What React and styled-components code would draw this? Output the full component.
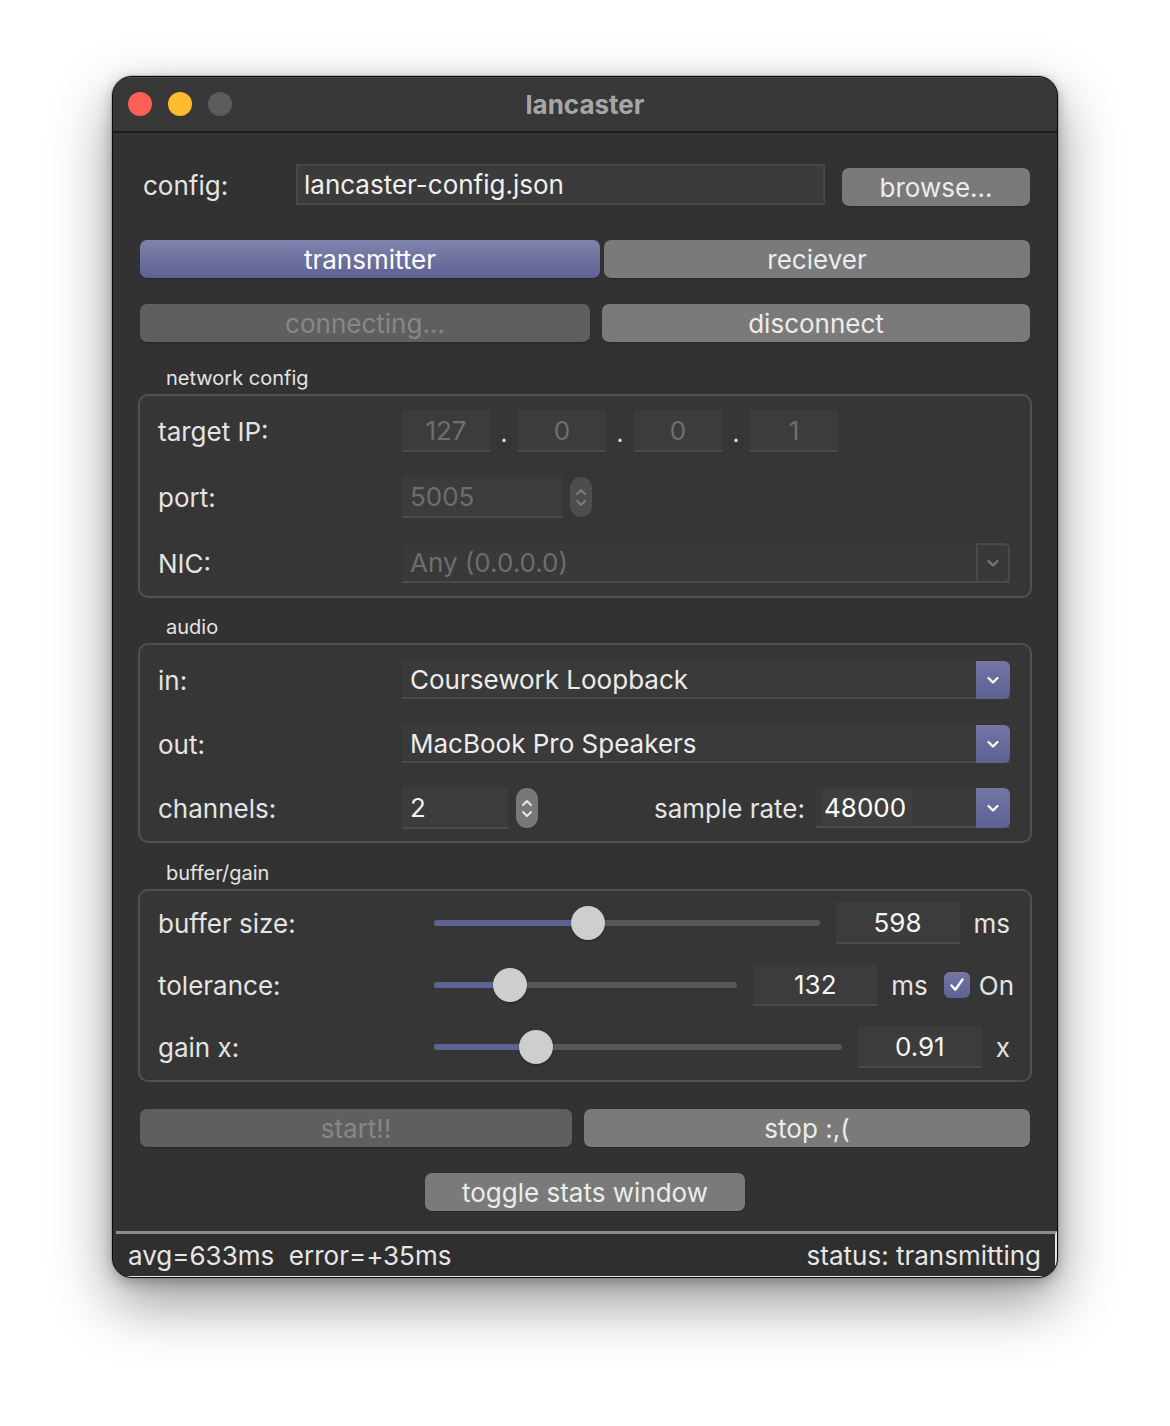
import React from "react";
import styled, { createGlobalStyle } from "styled-components";

const GlobalStyle = createGlobalStyle`
  html, body { margin: 0; padding: 0; background: #ffffff; }
  body { font-family: Inter, "Noto Sans", "Liberation Sans", sans-serif; -webkit-font-smoothing: antialiased; }
  * { box-sizing: border-box; }
`;

const FS = 26;

const Page = styled.div`
  width: 1170px;
  height: 1426px;
  display: flex;
  justify-content: center;
  padding-top: 76px;
  background: #ffffff;
`;

const Window = styled.div`
  width: 946px;
  height: 1202px;
  border-radius: 20px;
  border: 1px solid #0a0a0a;
  background: #323232;
  overflow: hidden;
  display: flex;
  flex-direction: column;
  box-shadow: 0 0 0 1px rgba(120, 120, 120, 0.35), 0 24px 60px rgba(0, 0, 0, 0.42),
    0 4px 14px rgba(0, 0, 0, 0.25);
`;

const TitleBar = styled.div`
  height: 56px;
  flex: none;
  background: #383838;
  border-bottom: 2px solid #1c1c1c;
  display: flex;
  align-items: center;
  padding-left: 15px;
  position: relative;
  box-shadow: inset 0 1px 0 rgba(255, 255, 255, 0.12);
`;

const Lights = styled.div`
  display: flex;
  gap: 16px;
`;

const Light = styled.span`
  width: 24px;
  height: 24px;
  border-radius: 50%;
  background: ${(p) => p.$c};
`;

const Title = styled.div`
  position: absolute;
  left: 0;
  right: 0;
  top: 12px;
  text-align: center;
  font-size: 26px;
  font-weight: 700;
  color: #a6a6a6;
  pointer-events: none;
`;

const Content = styled.div`
  flex: 1;
  padding: 31px 25px 20px;
  display: flex;
  flex-direction: column;
`;

const ConfigRow = styled.div`
  display: flex;
  align-items: flex-start;
  height: 42px;
  padding: 0 2px 0 5px;
  gap: 17px;
`;

const ConfigLabel = styled.div`
  width: 136px;
  height: 42px;
  display: flex;
  align-items: center;
  font-size: ${FS}px;
  color: #e4e4e4;
`;

const TextField = styled.div`
  flex: 1;
  height: 41px;
  background: #3b3b3b;
  border: 2px solid #474747;
  display: flex;
  align-items: center;
  padding-left: 6px;
  font-size: ${FS}px;
  color: #f0f0f0;
`;

const Button = styled.div`
  height: 38px;
  border-radius: 7px;
  display: flex;
  align-items: center;
  justify-content: center;
  font-size: ${FS}px;
  flex: ${(p) => (p.$w ? "none" : "1")};
  width: ${(p) => (p.$w ? `${p.$w}px` : "auto")};
  margin-top: ${(p) => p.$mt || 0}px;
  background: ${(p) =>
    p.$active
      ? "linear-gradient(#8083ac, #5e6293)"
      : p.$disabled
      ? "#5f5f5f"
      : "#7a7a7a"};
  box-shadow: 0 1px 1px rgba(0, 0, 0, 0.25);
  color: ${(p) => (p.$active ? "#ffffff" : p.$disabled ? "#878787" : "#ececec")};
`;

const ButtonRow = styled.div`
  display: flex;
  gap: ${(p) => p.$gap}px;
  margin-top: ${(p) => p.$mt}px;
  padding: 0 2px;
`;

const CenterRow = styled.div`
  display: flex;
  justify-content: center;
  margin-top: ${(p) => p.$mt}px;
`;

const Legend = styled.div`
  height: 32px;
  margin-top: ${(p) => p.$mt}px;
  padding-left: 28px;
  display: flex;
  align-items: center;
  font-size: 20px;
  color: #e4e4e4;
`;

const Group = styled.div`
  border: 2px solid #515151;
  border-radius: 10px;
  background: #363636;
  padding: ${(p) => p.$pt}px 20px 12px 18px;
  display: flex;
  flex-direction: column;
  gap: ${(p) => p.$gap}px;
`;

const Row = styled.div`
  height: 42px;
  display: grid;
  grid-template-columns: ${(p) => p.$label}px 1fr;
  align-items: center;
`;

const Label = styled.div`
  font-size: ${FS}px;
  color: #e4e4e4;
`;

const Controls = styled.div`
  display: flex;
  align-items: center;
  height: 42px;
`;

const Field = styled.div`
  width: ${(p) => p.$w}px;
  height: ${(p) => p.$h || 42}px;
  background: #3c3c3c;
  border-bottom: 2px solid #4a4a4a;
  display: flex;
  align-items: center;
  justify-content: ${(p) => (p.$center ? "center" : "flex-start")};
  padding-left: ${(p) => (p.$center ? 0 : 8)}px;
  font-size: ${FS}px;
  color: ${(p) => (p.$disabled ? "#6e6e6e" : "#f2f2f2")};
  flex: none;
`;

const Dot = styled.span`
  width: 28px;
  text-align: center;
  color: #e0e0e0;
  font-size: 24px;
  line-height: 1;
  padding-top: 6px;
`;

const Stepper = styled.div`
  width: 22px;
  height: 40px;
  margin-left: ${(p) => p.$ml}px;
  border-radius: 11px;
  background: ${(p) => (p.$disabled ? "#4d4d4d" : "#787878")};
  display: flex;
  flex-direction: column;
  align-items: center;
  justify-content: center;
  gap: 3px;
  color: ${(p) => (p.$disabled ? "#7c7c7c" : "#e6e6e6")};
`;

const Select = styled.div`
  flex: ${(p) => (p.$w ? "none" : "1")};
  width: ${(p) => (p.$w ? `${p.$w}px` : "auto")};
  height: ${(p) => p.$h}px;
  background: ${(p) => (p.$disabled ? "#393939" : "#3a3a3a")};
  border-bottom: 2px solid #4b4b4b;
  display: flex;
  align-items: stretch;
`;

const SelectText = styled.div`
  flex: 1;
  display: flex;
  align-items: center;
  padding-left: 8px;
  font-size: ${FS}px;
  color: ${(p) => (p.$disabled ? "#6e6e6e" : "#ececec")};
`;

const Highlight = styled.span`
  background: #3f3f3f;
  padding: 3px 6px 3px 2px;
  margin-left: -2px;
  color: #ffffff;
`;

const Arrow = styled.div`
  width: 34px;
  flex: none;
  display: flex;
  align-items: center;
  justify-content: center;
  border-radius: 0 6px 6px 0;
  margin-bottom: -2px;
  background: ${(p) => (p.$disabled ? "transparent" : "linear-gradient(#7476a4, #5d6192)")};
  border: ${(p) => (p.$disabled ? "2px solid #4a4a4a" : "none")};
  color: ${(p) => (p.$disabled ? "#777777" : "#ffffff")};
`;

const SampleLabel = styled.div`
  margin-left: auto;
  margin-right: 11px;
  font-size: ${FS}px;
  color: #e4e4e4;
`;

const SliderRow = styled.div`
  height: 42px;
  display: flex;
  align-items: center;
`;

const SliderLabel = styled.div`
  width: 276px;
  flex: none;
  font-size: ${FS}px;
  color: #e4e4e4;
`;

const Track = styled.div`
  flex: 1;
  height: 6px;
  border-radius: 3px;
  background: #575757;
  position: relative;
  margin-right: 16px;
`;

const Fill = styled.div`
  position: absolute;
  left: 0;
  top: 0;
  bottom: 0;
  border-radius: 3px;
  background: #5e6294;
`;

const Thumb = styled.div`
  position: absolute;
  top: 50%;
  width: 34px;
  height: 34px;
  margin: -17px 0 0 -17px;
  border-radius: 50%;
  background: #cecece;
  box-shadow: 0 1px 2px rgba(0, 0, 0, 0.35);
`;

const ValueBox = styled.div`
  width: 124px;
  height: 42px;
  flex: none;
  background: #3c3c3c;
  border-bottom: 2px solid #4a4a4a;
  display: flex;
  align-items: center;
  justify-content: center;
  font-size: ${FS}px;
  color: #f4f4f4;
`;

const Unit = styled.div`
  margin-left: 14px;
  font-size: ${FS}px;
  color: #e4e4e4;
  flex: none;
`;

const Check = styled.div`
  width: 26px;
  height: 26px;
  margin-left: 16px;
  border-radius: 6px;
  background: linear-gradient(#7476a4, #5d6192);
  display: flex;
  align-items: center;
  justify-content: center;
  flex: none;
`;

const CheckText = styled.div`
  margin-left: 9px;
  margin-right: -4px;
  font-size: ${FS}px;
  color: #e4e4e4;
`;

const StatusBar = styled.div`
  flex: none;
  height: 47px;
  margin: 0 0 0 3px;
  border-top: 3px solid #8d8d8d;
  border-bottom: 2px solid #ececec;
  border-right: 2px solid #e0e0e0;
  border-bottom-right-radius: 4px;
  background: #2f2f2f;
  display: flex;
  align-items: center;
  justify-content: space-between;
  padding: 0 14px 0 12px;
  font-size: ${FS}px;
  color: #e6e6e6;
  white-space: pre;
`;

const ChevronDown = () => (
  <svg width="20" height="20" viewBox="0 0 20 20" fill="none">
    <path d="M5.5 8l4.5 4.5 4.5-4.5" stroke="currentColor" strokeWidth="2.2" strokeLinecap="round" strokeLinejoin="round" />
  </svg>
);

const ChevronUp = () => (
  <svg width="14" height="9" viewBox="0 0 14 9" fill="none">
    <path d="M3 7l4-4 4 4" stroke="currentColor" strokeWidth="2" strokeLinecap="round" strokeLinejoin="round" />
  </svg>
);

const ChevronSmallDown = () => (
  <svg width="14" height="9" viewBox="0 0 14 9" fill="none">
    <path d="M3 2l4 4 4-4" stroke="currentColor" strokeWidth="2" strokeLinecap="round" strokeLinejoin="round" />
  </svg>
);

const StepperIcon = ({ disabled, ml }) => (
  <Stepper $disabled={disabled} $ml={ml}>
    <ChevronUp />
    <ChevronSmallDown />
  </Stepper>
);

const Dropdown = ({ value, w, h, disabled, highlight }) => (
  <Select $w={w} $h={h} $disabled={disabled}>
    <SelectText $disabled={disabled}>{highlight ? <Highlight>{value}</Highlight> : value}</SelectText>
    <Arrow $disabled={disabled}>
      <ChevronDown />
    </Arrow>
  </Select>
);

const Slider = ({ pct }) => (
  <Track>
    <Fill style={{ width: `${pct}%` }} />
    <Thumb style={{ left: `${pct}%` }} />
  </Track>
);

export default function App() {
  return (
    <>
      <GlobalStyle />
      <Page>
        <Window>
          <TitleBar>
            <Lights>
              <Light $c="#fe5f57" />
              <Light $c="#febc2e" />
              <Light $c="#5b5b5d" />
            </Lights>
            <Title>lancaster</Title>
          </TitleBar>
          <Content>
            <ConfigRow>
              <ConfigLabel>config:</ConfigLabel>
              <TextField>lancaster-config.json</TextField>
              <Button $w={188} $mt={4}>browse...</Button>
            </ConfigRow>

            <ButtonRow $gap={4} $mt={34}>
              <Button $w={460} $active>transmitter</Button>
              <Button>reciever</Button>
            </ButtonRow>

            <ButtonRow $gap={12} $mt={26}>
              <Button $w={450} $disabled>connecting...</Button>
              <Button>disconnect</Button>
            </ButtonRow>

            <Legend $mt={20}>network config</Legend>
            <Group $pt={14} $gap={24}>
              <Row $label={244}>
                <Label>target IP:</Label>
                <Controls>
                  <Field $w={88} $center $disabled>127</Field>
                  <Dot>.</Dot>
                  <Field $w={88} $center $disabled>0</Field>
                  <Dot>.</Dot>
                  <Field $w={88} $center $disabled>0</Field>
                  <Dot>.</Dot>
                  <Field $w={88} $center $disabled>1</Field>
                </Controls>
              </Row>
              <Row $label={244}>
                <Label>port:</Label>
                <Controls>
                  <Field $w={160} $disabled>5005</Field>
                  <StepperIcon disabled ml={8} />
                </Controls>
              </Row>
              <Row $label={244}>
                <Label>NIC:</Label>
                <Controls>
                  <Dropdown value="Any (0.0.0.0)" h={40} disabled />
                </Controls>
              </Row>
            </Group>

            <Legend $mt={13}>audio</Legend>
            <Group $pt={14} $gap={22}>
              <Row $label={244}>
                <Label>in:</Label>
                <Controls>
                  <Dropdown value="Coursework Loopback" h={38} />
                </Controls>
              </Row>
              <Row $label={244}>
                <Label>out:</Label>
                <Controls>
                  <Dropdown value="MacBook Pro Speakers" h={38} />
                </Controls>
              </Row>
              <Row $label={244}>
                <Label>channels:</Label>
                <Controls>
                  <Field $w={106}>2</Field>
                  <StepperIcon ml={8} />
                  <SampleLabel>sample rate:</SampleLabel>
                  <Dropdown value="48000" w={194} h={40} highlight />
                </Controls>
              </Row>
            </Group>

            <Legend $mt={14}>buffer/gain</Legend>
            <Group $pt={11} $gap={20}>
              <SliderRow>
                <SliderLabel>buffer size:</SliderLabel>
                <Slider pct={40} />
                <ValueBox>598</ValueBox>
                <Unit>ms</Unit>
              </SliderRow>
              <SliderRow>
                <SliderLabel>tolerance:</SliderLabel>
                <Slider pct={25} />
                <ValueBox>132</ValueBox>
                <Unit>ms</Unit>
                <Check>
                  <svg width="18" height="18" viewBox="0 0 18 18" fill="none">
                    <path d="M3.5 9.5l3.8 4.2L14.5 3.5" stroke="#ffffff" strokeWidth="2.4" strokeLinecap="round" strokeLinejoin="round" />
                  </svg>
                </Check>
                <CheckText>On</CheckText>
              </SliderRow>
              <SliderRow>
                <SliderLabel>gain x:</SliderLabel>
                <Slider pct={25} />
                <ValueBox>0.91</ValueBox>
                <Unit>x</Unit>
              </SliderRow>
            </Group>

            <ButtonRow $gap={12} $mt={27}>
              <Button $w={432} $disabled>start!!</Button>
              <Button>stop :,(</Button>
            </ButtonRow>

            <CenterRow $mt={26}>
              <Button $w={320}>toggle stats window</Button>
            </CenterRow>
          </Content>
          <StatusBar>
            <span>avg=633ms  error=+35ms</span>
            <span>status: transmitting</span>
          </StatusBar>
        </Window>
      </Page>
    </>
  );
}
